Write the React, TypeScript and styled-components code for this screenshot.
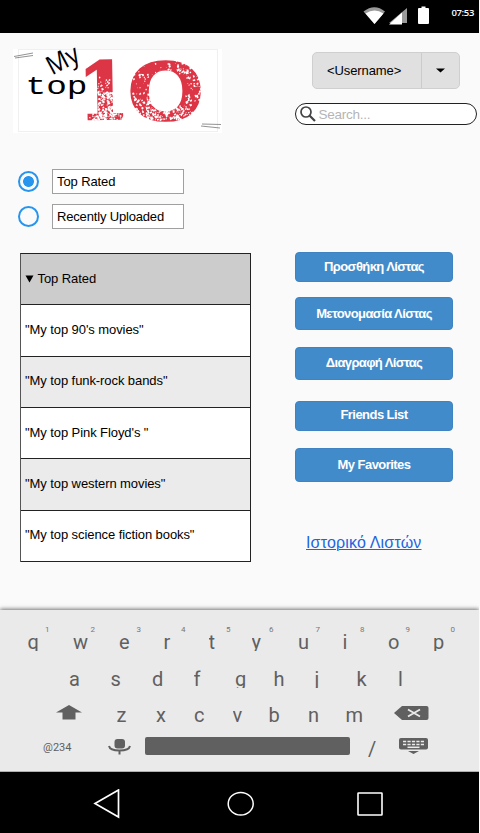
import React from "react";
import styled, { createGlobalStyle } from "styled-components";

const GlobalStyle = createGlobalStyle`
  * { box-sizing: border-box; }
  body { margin: 0; background: #fafafa; }
`;

const Screen = styled.div`
  width: 479px;
  height: 833px;
  display: flex;
  flex-direction: column;
  overflow: hidden;
  background: #fafafa;
  color: #000;
  font-family: "Liberation Sans", Arial, sans-serif;
  font-size: 13px;
`;

const StatusBar = styled.header`
  height: 33px;
  flex: none;
  display: flex;
  align-items: flex-start;
  justify-content: flex-end;
  padding-right: 5px;
  background: #000;
`;

const Clock = styled.span`
  margin: 7px 0 0 22px;
  color: #fff;
  font: 9.5px/12px "Open Sans", "Noto Sans", sans-serif;
  font-weight: 600;
  letter-spacing: -0.35px;
`;

const Main = styled.main`
  height: 571px;
  flex: none;
  display: grid;
  grid-template-columns: 295px 184px;
`;

const Left = styled.section`
  display: flex;
  flex-direction: column;
  padding: 16px 0 0 13px;
`;

const Right = styled.section`
  display: flex;
  flex-direction: column;
  align-items: flex-start;
  padding-top: 19px;
`;

const Logo = styled.svg`
  display: block;
  width: 209px;
  height: 84px;
  overflow: visible;
`;

const Options = styled.div`
  display: flex;
  flex-direction: column;
  gap: 10px;
  margin: 36px 0 0 5px;
`;

const Option = styled.label`
  display: flex;
  align-items: center;
  gap: 13px;
  height: 25px;
`;

const Radio = styled.span<{ $checked?: boolean }>`
  width: 21px;
  height: 21px;
  flex: none;
  border: 2px solid #2795ee;
  border-radius: 50%;
  background: ${(p) =>
    p.$checked ? "radial-gradient(circle, #2795ee 5px, #fff0 5.8px)" : "transparent"};
`;

const OptionText = styled.span<{ $spacing: number }>`
  width: 132px;
  height: 25px;
  border: 1px solid #a0a0a0;
  background: #fff;
  padding-left: 4px;
  line-height: 24px;
  letter-spacing: ${(p) => p.$spacing}px;
`;

const Table = styled.div`
  display: grid;
  grid-template-rows: repeat(6, 51.35px);
  width: 231px;
  margin: 24px 0 0 7px;
  border: 1px solid #222;
  border-left-color: #555;
  border-bottom: 0;
`;

const Row = styled.div<{ $bg: string }>`
  display: flex;
  align-items: center;
  gap: 3.5px;
  padding: 0 0 2px 4px;
  border-bottom: 1.4px solid #222;
  background: ${(p) => p.$bg};
  letter-spacing: -0.08px;
  white-space: pre;
`;

const UserMenu = styled.div`
  display: flex;
  width: 148px;
  height: 37px;
  margin-left: 17px;
  border: 1px solid #cfcfcf;
  border-radius: 5px;
  background: #e0e0e0;
`;

const UserName = styled.span`
  width: 109px;
  padding-left: 14px;
  border-right: 1px solid #cbcbcb;
  line-height: 35px;
  letter-spacing: -0.1px;
`;

const Caret = styled.span`
  flex: 1;
  display: grid;
  place-items: center;
`;

const Search = styled.div`
  display: flex;
  align-items: center;
  gap: 2.5px;
  width: 182px;
  height: 22px;
  margin-top: 14px;
  padding-left: 4px;
  border: 1px solid #222;
  border-radius: 11px;
  background: #fff;
  color: #b5b5b5;
  font-size: 13.5px;
  letter-spacing: -0.25px;
`;

const Action = styled.button<{ $top: number; $height: number; $spacing: number; $shift?: number }>`
  width: 158px;
  height: ${(p) => p.$height}px;
  margin: ${(p) => p.$top}px 0 0 0;
  padding: 0 0 ${(p) => p.$shift ?? 1}px;
  border: 1px solid #3e84c2;
  border-radius: 4px;
  background: #428bca;
  color: #fff;
  font: bold 13px/15px "Liberation Sans", Arial, sans-serif;
  letter-spacing: ${(p) => p.$spacing}px;
`;

const HistoryLink = styled.a`
  margin: 51px 0 0 11px;
  color: #1b66e0;
  font-size: 16px;
  line-height: 19px;
  letter-spacing: 0.17px;
  text-decoration: underline;
  text-decoration-thickness: 1px;
`;

const Keyboard = styled.section`
  height: 162px;
  flex: none;
  margin-top: 6px;
  padding-top: 23px;
  border-bottom: 1px solid #b0b0b0;
  background: #eaeaea;
  box-shadow: 0 -1px 4px rgba(0, 0, 0, 0.55);
  color: #606060;
  font-family: Roboto, sans-serif;
`;

const KeyRow = styled.div<{ $left: number; $height: number }>`
  display: flex;
  height: ${(p) => p.$height}px;
  padding-left: ${(p) => p.$left}px;
`;

const Key = styled.span<{ $step: number }>`
  position: relative;
  width: ${(p) => p.$step}px;
  height: 18px;
  flex: none;
`;

const Letter = styled.span`
  display: block;
  height: 18px;
  overflow: hidden;
  font-size: 20px;
  line-height: 18px;
`;

const Digit = styled.sup`
  position: absolute;
  left: 17.5px;
  top: -8px;
  font-size: 8px;
  line-height: 9px;
  color: #777;
`;

const BottomRow = styled.div`
  display: flex;
  align-items: flex-start;
  padding-left: 43px;
`;

const Symbols = styled.span`
  width: 65px;
  margin-top: 4px;
  font-size: 11px;
  line-height: 13px;
`;

const SpaceBar = styled.span`
  width: 205px;
  height: 18px;
  margin: 0 18px 0 14px;
  border-radius: 2px;
  background: #606060;
`;

const Slash = styled.span`
  width: 31px;
  margin-top: 3px;
  font-size: 20px;
  line-height: 18px;
`;

const NavBar = styled.nav`
  height: 61px;
  flex: none;
  display: flex;
  padding: 17px 0 0 93px;
  background: #000;
`;

const Icon = styled.svg<{ $ml?: number; $mt?: number }>`
  display: block;
  flex: none;
  margin: ${(p) => p.$mt ?? 0}px 0 0 ${(p) => p.$ml ?? 0}px;
`;

type Box = [number, number, number, number, number];

/* Worn-ink specks: x, y, width, height, count */
const wornAreas: Box[] = [
  [84, 28, 18, 18, 30],
  [84, 42, 16, 28, 190],
  [76, 64, 34, 7, 75],
  [124, 14, 50, 12, 25],
  [160, 12, 18, 12, 30],
  [118, 25, 17, 28, 35],
  [121, 50, 20, 16, 75],
  [132, 58, 36, 13, 150],
  [162, 55, 16, 12, 35],
  [172, 26, 16, 28, 60],
];

function makeSpecks() {
  let seed = 29;
  const next = () => {
    seed = (seed * 16807) % 2147483647;
    return seed / 2147483647;
  };
  let d = "";
  for (const [x, y, w, h, count] of wornAreas) {
    for (let i = 0; i < count; i++) {
      const px = x + next() * w;
      const py = y + next() * h;
      const s = 0.4 + next() * 1.5;
      d += `M${px.toFixed(1)} ${py.toFixed(1)}l${s.toFixed(1)} ${(-s * next()).toFixed(1)} ${(s * 0.4).toFixed(1)} ${s.toFixed(1)} ${(-s).toFixed(1)} ${(s * 0.5).toFixed(1)}z`;
    }
  }
  return d;
}
const specks = makeSpecks();

function BrandLogo() {
  return (
    <Logo viewBox="0 0 209 84">
      <rect width="209" height="84" fill="#fff" />
      <rect x="5.5" y=".5" width="199" height="82" fill="#fff" stroke="#f0f0f0" />
      <g fill="#dc3545" stroke="#dc3545">
        <text transform="translate(65.5 70.5) rotate(-1) scale(.93 1)" fontFamily="DejaVu Serif" fontWeight="700" fontSize="79" strokeWidth="2">1</text>
        <text transform="translate(112.5 70.5) scale(1.52 1)" fontFamily="Inter" fontWeight="600" fontSize="80" strokeWidth="1.6">0</text>
      </g>
      <path d={specks} fill="#fff" />
      <text transform="translate(12.5 45) scale(1.3 1)" fontFamily="Liberation Mono" fontWeight="400" fontSize="26.500">top</text>
      <text transform="translate(39 26.5) rotate(-28) scale(.92 1)" fontFamily="Open Sans" fontSize="26">My</text>
      <path d="M1 7.5L20 4M2 9L20 6.5M189 75L208 75.5M188 77L207 79" stroke="#777" strokeWidth=".8" fill="none" />
    </Logo>
  );
}

const rows = [
  "\"My top 90's movies\"",
  '"My top funk-rock bands"',
  "\"My top Pink Floyd's \"",
  '"My top western movies"',
  '"My top science fiction books"',
];

type KeyDef = [string, number, string?];
const topKeys: KeyDef[] = [
  ["q", 45.5, "1"], ["w", 46, "2"], ["e", 44.5, "3"], ["r", 45, "4"], ["t", 43, "5"],
  ["y", 46.5, "6"], ["u", 44.5, "7"], ["i", 45.5, "8"], ["o", 45, "9"], ["p", 30, "0"],
];
const homeKeys: KeyDef[] = [
  ["a", 41.5], ["s", 41.5], ["d", 41.5], ["f", 41.5], ["g", 38.5], ["h", 41], ["j", 42], ["k", 41.5], ["l", 20],
];
const lowerKeys: KeyDef[] = [
  ["z", 39.5], ["x", 38], ["c", 38.5], ["v", 36], ["b", 39.5], ["n", 37.5], ["m", 48],
];

const Keys = ({ items }: { items: KeyDef[] }) => (
  <>
    {items.map(([letter, step, digit]) => (
      <Key key={letter} $step={step}>
        <Letter>{letter}</Letter>
        {digit && <Digit>{digit}</Digit>}
      </Key>
    ))}
  </>
);

export default function App() {
  return (
    <>
      <GlobalStyle />
      <Screen>
        <StatusBar>
          <Icon width="24" height="19" $mt={6}>
            <path d="M.5 5.5Q11.500-3 22 5.500L11.500 18z" fill="#999" />
            <path d="M2.500 7.500Q11.500 1.500 20.500 7.500L11.500 18z" fill="#fff" />
          </Icon>
          <Icon width="18" height="18" $ml={2} $mt={7}>
            <path d="M18 1V16H0z" fill="#999" />
            <path d="M13 5.500V17.500H0z" fill="#fff" />
          </Icon>
          <Icon width="11" height="18" $ml={11} $mt={6}>
            <path d="M1 2H3.500V.5H7.500V2H10Q11 2 11 3V17Q11 18 10 18H1Q0 18 0 17V3Q0 2 1 2z" fill="#fff" />
          </Icon>
          <Clock>07:53</Clock>
        </StatusBar>

        <Main>
          <Left>
            <BrandLogo />
            <Options>
              <Option><Radio $checked /><OptionText $spacing={-0.1}>Top Rated</OptionText></Option>
              <Option><Radio /><OptionText $spacing={-0.17}>Recently Uploaded</OptionText></Option>
            </Options>
            <Table>
              <Row $bg="#ccc">
                <Icon width="9" height="8" $mt={2}><path d="M.5 .5H8.500L4.500 7.500z" /></Icon>
                <span>Top Rated</span>
              </Row>
              {rows.map((text, i) => (
                <Row key={text} $bg={i % 2 ? "#ebebeb" : "#fff"}>{text}</Row>
              ))}
            </Table>
          </Left>

          <Right>
            <UserMenu>
              <UserName>&lt;Username&gt;</UserName>
              <Caret><svg width="9" height="5"><path d="M0 .5H9L4.500 4.500z" /></svg></Caret>
            </UserMenu>
            <Search>
              <svg width="16" height="16" fill="none" stroke="#444">
                <circle cx="6" cy="6" r="5" strokeWidth="1.700" />
                <path d="M9.500 9.500L15 15" strokeWidth="2.200" />
              </svg>
              <span>Search...</span>
            </Search>
            <Action $top={127} $height={30} $spacing={-0.6}>Προσθήκη Λίστας</Action>
            <Action $top={15} $height={33} $spacing={-0.6}>Μετονομασία Λίστας</Action>
            <Action $top={17} $height={33} $spacing={-0.63} $shift={2}>Διαγραφή Λίστας</Action>
            <Action $top={21} $height={30} $spacing={-0.55} $shift={3}>Friends List</Action>
            <Action $top={17} $height={34} $spacing={-0.55}>My Favorites</Action>
            <HistoryLink>Ιστορικό Λιστών</HistoryLink>
          </Right>
        </Main>

        <Keyboard>
          <KeyRow $left={27.5} $height={37}><Keys items={topKeys} /></KeyRow>
          <KeyRow $left={69} $height={36}><Keys items={homeKeys} /></KeyRow>
          <KeyRow $left={56} $height={31}>
            <Icon width="26" height="15" $mt={-1}><path d="M13 0L26 7.500H19.500V14.500H6.500V7.500H0z" fill="#606060" /></Icon>
            <Key $step={34.5}> </Key>
            <Keys items={lowerKeys} />
            <Icon width="35" height="15" $ml={0.5}>
              <path d="M0 7L8 0H32.500Q34.500 0 34.500 2V12Q34.500 14 32.500 14H8z" fill="#606060" />
              <path d="M14 3.500L26 10.500M26 3.500L14 10.500" stroke="#eaeaea" strokeWidth="1.800" />
            </Icon>
          </KeyRow>
          <BottomRow>
            <Symbols>@234</Symbols>
            <Icon width="23" height="16" $mt={2}>
              <rect x="6.500" width="10.500" height="9.500" rx="3" fill="#606060" />
              <path d="M1 7Q2 11.500 11.500 11.500T22 7M11.500 11V15.500" fill="none" stroke="#606060" strokeWidth="2" />
            </Icon>
            <SpaceBar />
            <Slash>/</Slash>
            <Icon width="29" height="16" $mt={1}>
              <rect width="29" height="11.500" rx="2" fill="#606060" />
              <path d="M9 13H20L14.500 16z" fill="#606060" />
              <path d="M4 3.500H25M4 6.500H25" stroke="#eaeaea" strokeWidth="1.600" strokeDasharray="3.200 1.250" />
              <path d="M8.500 9.300H20.500" stroke="#eaeaea" strokeWidth="1.500" />
            </Icon>
          </BottomRow>
        </Keyboard>

        <NavBar>
          <Icon width="28" height="30" fill="none" stroke="#fff" strokeWidth="1.700">
            <path d="M25.500 1V28L2 14.500z" />
          </Icon>
          <Icon width="28" height="26" $ml={106} $mt={2} fill="none" stroke="#fff" strokeWidth="1.500">
            <ellipse cx="13.700" cy="12.700" rx="12.500" ry="11.300" />
          </Icon>
          <Icon width="26" height="25" $ml={102} $mt={3} fill="none" stroke="#fff" strokeWidth="1.600">
            <rect x="1" y="1" width="24" height="22" rx=".5" />
          </Icon>
        </NavBar>
      </Screen>
    </>
  );
}
